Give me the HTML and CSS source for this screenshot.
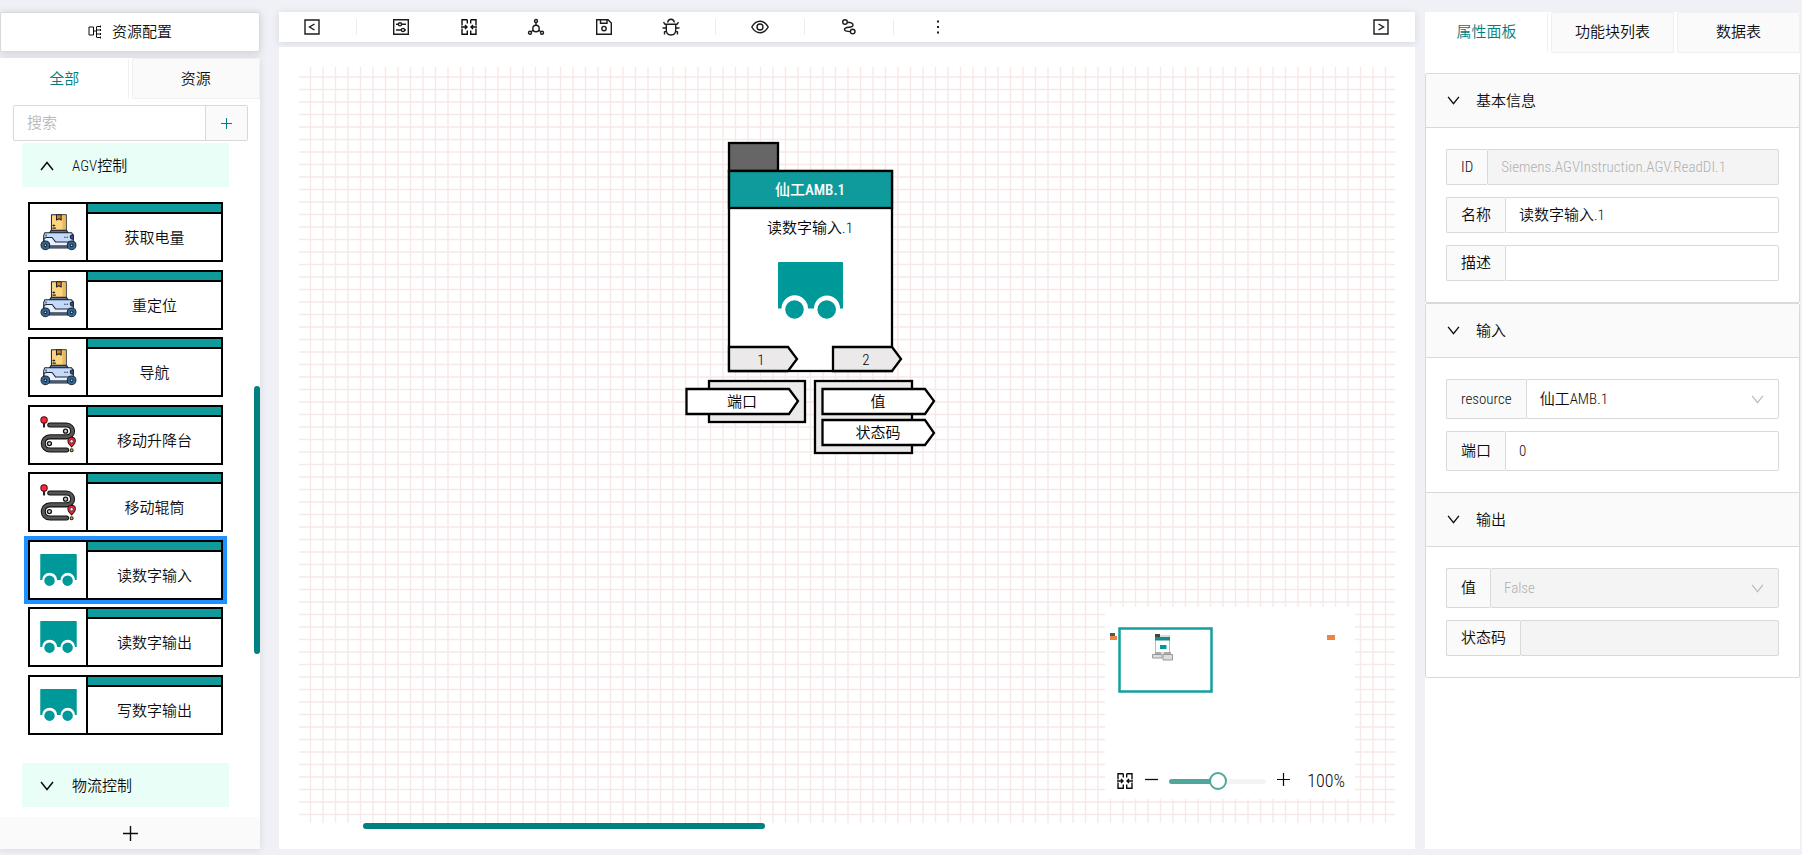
FILE: index.html
```html
<!DOCTYPE html>
<html lang="zh-CN">
<head>
<meta charset="utf-8">
<title>资源配置</title>
<link rel="stylesheet" href="styles.css">
</head>
<body>
<svg class="sprite" aria-hidden="true">
  <symbol id="i-agv" viewBox="0 0 110 110">
    <g stroke="#1b2430" stroke-width="3" stroke-linejoin="round">
      <path fill="#fdd57e" d="M34 2H78V49H34z"/>
      <path fill="#e8b760" stroke="none" d="M67 4H76V47H67z"/>
      <path fill="#e27a16" d="M49 2H63V18L56 14L49 18z"/>
      <path fill="#5f7590" d="M34 48H78L84 56H28z"/>
      <path fill="#c4dafa" d="M14 56H94L99 64V92H11V64z"/>
      <path fill="#e8f1fd" d="M12 72L20 70H36L46 83H98V96H12z"/>
      <path fill="none" d="M18 61V67M72 69H76M79 69H83"/>
      <path fill="#3b559f" d="M99 62V75Q90 75 90 68Q90 62 99 62z"/>
      <path fill="#7890ab" d="M28 95H82V101H28z"/>
      <circle cx="16" cy="93" r="13" fill="#326896"/><circle cx="94" cy="93" r="13" fill="#326896"/>
      <circle cx="16" cy="93" r="4" fill="#c4dafa"/><circle cx="94" cy="93" r="4" fill="#c4dafa"/>
    </g>
    <path d="M41 31V37M37 34H45M37 42H47" stroke="#1b2430" stroke-width="3"/>
  </symbol>
  <symbol id="i-belt" viewBox="0 0 110 110">
    <g fill="none" stroke-linecap="round">
      <path d="M29 27H78C102 27 104 62 78 62H30C3 62 3 101 30 101H79" stroke="#111" stroke-width="15"/>
      <path d="M29 27H78C102 27 104 62 78 62H30C3 62 3 101 30 101H79" stroke="#555" stroke-width="9"/>
    </g>
    <g fill="#d5d7da" stroke="#111" stroke-width="4"><circle cx="76" cy="45" r="6"/><circle cx="28" cy="82" r="6"/></g>
    <path d="M12 20V34" stroke="#222" stroke-width="6"/>
    <circle cx="12" cy="12" r="9.500" fill="#ff2635" stroke="#401015" stroke-width="3"/>
    <path d="M94 92L85 82Q78 64 94 63Q110 64 103 82z" fill="#ee2636" stroke="#401015" stroke-width="3"/>
    <circle cx="94" cy="75" r="5" fill="#eee" stroke="#401015" stroke-width="2"/>
    <circle cx="94" cy="102" r="4.500" fill="#e5b40d" stroke="#222" stroke-width="3"/>
  </symbol>
  <symbol id="i-cart" viewBox="0 0 65 57">
    <path fill="#009999" d="M1 0H64Q65 0 65 1V46.500H62A13 13 0 0 0 36 46.500H30A13 13 0 0 0 3.500 46.500H0V1Q0 0 1 0z"/>
    <circle cx="16.500" cy="47.500" r="9.300" fill="#009999"/><circle cx="48.700" cy="47.500" r="9.300" fill="#009999"/>
  </symbol>
  <symbol id="i-collapse" viewBox="0 0 18 18"><g fill="none" stroke="currentColor" stroke-width="1.400">
    <path d="M7.300 1.700H2V7.500M2 10.500V16.300H7.300V12.500M7.300 1.700V5.500M10.700 1.700H16V7.500M16 10.500V16.300H10.700V12.500M10.700 1.700V5.500M1 9H7M11 9H17M5 7L7 9L5 11M13 7L11 9L13 11"/></g></symbol>
  <symbol id="i-chev" viewBox="0 0 14 10"><path d="M1 1L7 8.500L13 1" fill="none" stroke="currentColor" stroke-width="1.500"/></symbol>
  <symbol id="i-plus" viewBox="0 0 14 14"><path d="M7 0V14M0 7H14" fill="none" stroke="currentColor" stroke-width="1.300"/></symbol>
</svg>

<div class="app">
  <aside class="sidebar">
    <button class="config-btn" type="button">
      <svg width="14" height="14" viewBox="0 0 14 14" fill="none" stroke="currentColor"><path d="M1 2H5.500V10H1zM5.500 6H8.500M13 1.500H9Q8.500 1.500 8.500 2V12Q8.500 12.500 9 12.500H13M8.500 5H13M8.500 9H13M12.500 .5V2.500M12.500 4V6M12.500 8V10M12.500 11.500V13.500"/></svg>
      <span>资源配置</span>
    </button>
    <div class="library">
      <div class="tabs" role="tablist">
        <button class="tab tab-active" role="tab" aria-selected="true">全部</button>
        <button class="tab" role="tab">资源</button>
      </div>
      <div class="search">
        <input type="text" placeholder="搜索" aria-label="搜索">
        <button type="button" aria-label="添加"><svg width="11" height="11"><use href="#i-plus"/></svg></button>
      </div>
      <div class="groups">
        <button class="group-head" type="button"><svg class="flip" width="14" height="10"><use href="#i-chev"/></svg>AGV控制</button>
        <ul class="blocks">
          <li class="block"><span class="block-icon"><svg width="37" height="37"><use href="#i-agv"/></svg></span><span class="block-name">获取电量</span></li>
          <li class="block"><span class="block-icon"><svg width="37" height="37"><use href="#i-agv"/></svg></span><span class="block-name">重定位</span></li>
          <li class="block"><span class="block-icon"><svg width="37" height="37"><use href="#i-agv"/></svg></span><span class="block-name">导航</span></li>
          <li class="block"><span class="block-icon"><svg width="37" height="37"><use href="#i-belt"/></svg></span><span class="block-name">移动升降台</span></li>
          <li class="block"><span class="block-icon"><svg width="37" height="37"><use href="#i-belt"/></svg></span><span class="block-name">移动辊筒</span></li>
          <li class="block block-selected"><span class="block-icon"><svg width="37" height="32"><use href="#i-cart"/></svg></span><span class="block-name">读数字输入</span></li>
          <li class="block"><span class="block-icon"><svg width="37" height="32"><use href="#i-cart"/></svg></span><span class="block-name">读数字输出</span></li>
          <li class="block"><span class="block-icon"><svg width="37" height="32"><use href="#i-cart"/></svg></span><span class="block-name">写数字输出</span></li>
        </ul>
        <button class="group-head" type="button"><svg width="14" height="10"><use href="#i-chev"/></svg>物流控制</button>
      </div>
      <button class="add-group" type="button" aria-label="添加分组"><svg width="15" height="15"><use href="#i-plus"/></svg></button>
      <span class="v-scroll"></span>
    </div>
  </aside>

  <main class="center">
    <div class="toolbar">
      <button class="tool" aria-label="收起左侧"><svg width="18" height="18" viewBox="0 0 18 18"><path d="M2 2H16V16H2zM11.500 6L6.500 9L11.500 12"/></svg></button>
      <span class="sep"></span>
      <div class="tool-group">
        <button class="tool" aria-label="设置"><svg width="18" height="18" viewBox="0 0 18 18"><path d="M1.700 1.700H16.300V16.300H1.700zM4 6.300H6.500M9.500 6.300H14M4 12H9.500M12.500 12H14"/><circle cx="8" cy="6.300" r="1.600"/><circle cx="11" cy="12" r="1.600"/></svg></button>
        <button class="tool" aria-label="对齐"><svg width="18" height="18"><use href="#i-collapse"/></svg></button>
        <button class="tool" aria-label="布局"><svg width="18" height="18" viewBox="0 0 18 18"><circle cx="9" cy="10.500" r="3.200"/><circle cx="9" cy="3" r="1.500"/><circle cx="3" cy="14.800" r="1.500"/><circle cx="15" cy="14.800" r="1.500"/><path d="M9 4.500V7.300M6.200 12.200L4.200 13.800M11.800 12.200L13.800 13.800"/></svg></button>
        <button class="tool" aria-label="保存"><svg width="18" height="18" viewBox="0 0 18 18"><path d="M1.700 1.700H13L16.300 5V16.300H1.700zM5.500 1.700V5.300H12V1.700"/><circle cx="9" cy="10.600" r="2.200"/></svg></button>
        <button class="tool" aria-label="调试"><svg width="18" height="18" viewBox="0 0 18 18"><path d="M4.300 6.200H13.700V12Q13.700 17 9 17Q4.300 17 4.300 12zM5.700 4.500Q6 1.200 9 1.200Q12 1.200 12.300 4.500M4.300 6.200H3L1.500 4.200M13.700 6.200H15L16.500 4.200M.5 10H4.300M13.700 10H17.500M4.500 13L2.500 14V16.500M13.500 13L15.500 14V16.500"/></svg></button>
      </div>
      <span class="sep"></span>
      <button class="tool" aria-label="预览"><svg width="18" height="18" viewBox="0 0 18 18"><path d="M.8 9Q4 3.200 9 3.200Q14 3.200 17.200 9Q14 14.800 9 14.800Q4 14.800 .8 9z"/><circle cx="9" cy="9" r="3"/></svg></button>
      <span class="sep"></span>
      <button class="tool" aria-label="连线"><svg width="18" height="18" viewBox="0 0 18 18"><circle cx="5" cy="4" r="2.300"/><circle cx="12.700" cy="13.600" r="2.300"/><path d="M7.300 4.300Q13 4.500 13 7Q13 9 9 9.200Q4.500 9.500 4.500 11.500Q4.500 13.600 10.400 13.600"/></svg></button>
      <span class="sep"></span>
      <button class="tool" aria-label="更多"><svg width="18" height="18" viewBox="0 0 18 18"><path class="dots" d="M8 2.500H10V4.500H8zM8 8H10V10H8zM8 13.500H10V15.500H8z"/></svg></button>
      <button class="tool tool-last" aria-label="收起右侧"><svg width="18" height="18" viewBox="0 0 18 18"><path d="M2 2H16V16H2zM6.500 6L11.500 9L6.500 12"/></svg></button>
    </div>

    <div class="canvas">
      <div class="stage">
        <svg class="grid" width="100%" height="100%">
          <defs><pattern id="mesh" width="25" height="25" patternUnits="userSpaceOnUse">
            <path d="M11.500 0V25M24 0V25M0 10H25M0 22.500H25" stroke="#f7e9e7" stroke-width="1.400"/>
          </pattern></defs>
          <rect width="100%" height="100%" fill="url(#mesh)"/>
        </svg>
        <svg class="node" width="252" height="318" viewBox="684 140 252 318">
          <g stroke="#000" stroke-width="2.300">
            <rect x="729" y="143" width="49" height="28" fill="#666"/>
            <rect x="729" y="171" width="163" height="200" fill="#fff"/>
            <rect x="729" y="171" width="163" height="37" fill="#0f9b9b"/>
            <path d="M729 347H788L797 359L788 371H729z" fill="#ebe9ea"/>
            <path d="M833 347H892L901 359L892 371H833z" fill="#ebe9ea"/>
            <rect x="709" y="381" width="96" height="41" fill="#ebe9ea"/>
            <rect x="815" y="381" width="97" height="72" fill="#ebe9ea"/>
            <path d="M686.500 389H789L798 401L789 414H686.500z" fill="#fff"/>
            <path d="M822.500 389H925L934 401L925 414H822.500z" fill="#fff"/>
            <path d="M822.500 420H925L934 433L925 445H822.500z" fill="#fff"/>
          </g>
          <use href="#i-cart" x="778" y="262" width="65" height="57"/>
          <g class="node-text">
            <text class="node-title" x="810" y="195">仙工AMB.1</text>
            <text x="810" y="233">读数字输入.1</text>
            <text x="761" y="365">1</text>
            <text x="866" y="365">2</text>
            <text x="742" y="407">端口</text>
            <text x="878" y="407">值</text>
            <text x="878" y="438">状态码</text>
          </g>
        </svg>
        <div class="minimap">
          <svg class="mini" width="250" height="140" viewBox="1105 607 250 140">
            <rect x="1110" y="633" width="5" height="4" fill="#555"/><rect x="1110" y="636" width="7" height="4" fill="#ee8444"/>
            <rect x="1327" y="635" width="8" height="5" fill="#ee8444"/>
            <rect x="1119.500" y="628.500" width="92" height="63" fill="#fff" stroke="#159f9f" stroke-width="2.500"/>
            <rect x="1155.500" y="636" width="14" height="17" fill="#fff" stroke="#bbb" stroke-width="1"/>
            <path d="M1155 634H1160V637H1155z" fill="#444"/><path d="M1155 637H1170V640.500H1155z" fill="#168d8d"/>
            <path d="M1160 645H1166.500V649H1160z" fill="#099"/>
            <path d="M1155 652H1161V655H1155zM1164 652H1171V655H1164z" fill="#aaa"/>
            <path d="M1152.500 654.500H1162V658H1152.500zM1163 654.500H1172.500V660H1163z" fill="#ddd" stroke="#999"/>
          </svg>
          <div class="zoom-bar">
            <button aria-label="适应画布"><svg width="18" height="18"><use href="#i-collapse"/></svg></button>
            <button aria-label="缩小"><svg width="13" height="14" viewBox="0 0 13 14"><path d="M0 5.500H13" stroke="currentColor" stroke-width="1.300"/></svg></button>
            <input type="range" min="0" max="200" value="100" aria-label="缩放">
            <button aria-label="放大"><svg class="raise" width="13" height="13"><use href="#i-plus"/></svg></button>
            <output>100%</output>
          </div>
        </div>
      </div>
      <span class="h-scroll"></span>
    </div>
  </main>

  <aside class="props">
    <div class="tabs" role="tablist">
      <button class="tab tab-active" role="tab" aria-selected="true">属性面板</button>
      <button class="tab" role="tab">功能块列表</button>
      <button class="tab" role="tab">数据表</button>
    </div>
    <section class="panel">
      <button class="panel-head" type="button"><svg width="13" height="9"><use href="#i-chev"/></svg>基本信息</button>
      <div class="panel-body">
        <div class="field"><label for="f-id">ID</label><input id="f-id" value="Siemens.AGVInstruction.AGV.ReadDI.1" disabled></div>
        <div class="field"><label for="f-name">名称</label><input id="f-name" value="读数字输入.1"></div>
        <div class="field"><label for="f-desc">描述</label><input id="f-desc"></div>
      </div>
    </section>
    <section class="panel">
      <button class="panel-head" type="button"><svg width="13" height="9"><use href="#i-chev"/></svg>输入</button>
      <div class="panel-body">
        <div class="field field-tall"><label for="f-res">resource</label><span class="select"><select id="f-res"><option>仙工AMB.1</option></select><svg width="13" height="9"><use href="#i-chev"/></svg></span></div>
        <div class="field field-tall"><label for="f-port">端口</label><input id="f-port" value="0"></div>
      </div>
      <button class="panel-head panel-head-next" type="button"><svg width="13" height="9"><use href="#i-chev"/></svg>输出</button>
      <div class="panel-body">
        <div class="field field-tall"><label for="f-val">值</label><span class="select"><select id="f-val" disabled><option>False</option></select><svg width="13" height="9"><use href="#i-chev"/></svg></span></div>
        <div class="field"><label for="f-code">状态码</label><input id="f-code" disabled></div>
      </div>
    </section>
  </aside>
</div>
</body>
</html>
```
FILE: styles.css
```css
* { box-sizing: border-box; }

body {
  margin: 0;
  background: #f0f1f6;
  color: #0c0c0c;
  font: 350 15px/24px "Roboto Condensed", "Liberation Sans Narrow", "Noto Sans CJK SC", sans-serif;
}

button, input, select {
  margin: 0;
  padding: 0;
  border: 0;
  border-radius: 0;
  background: none;
  color: inherit;
  font: inherit;
  outline: 0;
}

button { cursor: pointer; }
svg { display: block; flex: none; }
.sprite { position: absolute; width: 0; height: 0; }

.app {
  display: grid;
  grid-template-columns: 260px minmax(0, 1fr) 375px;
  height: 100vh;
  padding: 12px 2px 6px 0;
}

/* Left sidebar */
.sidebar { display: flex; flex-direction: column; gap: 6px; }

.config-btn {
  display: flex;
  align-items: center;
  justify-content: center;
  gap: 10px;
  height: 40px;
  border: 1px solid #d9d9d9;
  border-radius: 2px;
  background: #fff;
  box-shadow: 0 1px 8px rgba(0, 0, 0, .14);
}

.library {
  position: relative;
  display: flex;
  flex: 1;
  flex-direction: column;
  min-height: 0;
  background: #fff;
  box-shadow: 0 1px 8px rgba(0, 0, 0, .1);
}

.tabs { display: flex; gap: 3px; background: #fff; }

.tab {
  flex: 1;
  height: 41px;
  border: 1px solid #f0f0f0;
  border-radius: 2px 2px 0 0;
  background: #fafafa;
}

.tab-active {
  border-color: #fff #f0f0f0 #fff #fff;
  background: #fff;
  color: #008080;
}

.search {
  display: grid;
  grid-template-columns: 1fr 42px;
  height: 36px;
  margin: 6px 12px 2px 13px;
  border: 1px solid #d9d9d9;
  border-radius: 2px;
}

.search input { min-width: 0; padding: 0 13px; }
.search input::placeholder { color: #b8b8b8; }

.search button {
  display: grid;
  place-items: center;
  border-left: 1px solid #d9d9d9;
  background: #fafafa;
  color: #008080;
}

.groups { flex: 1; min-height: 0; overflow: hidden; padding: 0 31px 0 22px; }

.group-head {
  display: flex;
  align-items: center;
  gap: 18px;
  width: 100%;
  height: 44px;
  padding: 2px 0 0 18px;
  background: #eafef8;
}

.flip { transform: rotate(180deg); }

.blocks {
  display: grid;
  align-content: space-between;
  height: 533px;
  margin: 15px 6px 28px;
  padding: 0;
  list-style: none;
}

.block {
  display: grid;
  grid-template-columns: 56px 1fr;
  height: 60px;
  border: 2px solid #000;
}

.block-selected { outline: 4px solid #1e90ff; }

.block-icon { display: grid; place-items: center; }

.block-name {
  display: grid;
  place-items: center;
  border-left: 2px solid #000;
  background: linear-gradient(#0f9b9b 8px, #000 8px, #000 10px, #fff 10px);
  padding-top: 12px;
}

.add-group {
  display: grid;
  place-items: center;
  height: 32px;
  background: #fafafa;
}

.v-scroll {
  position: absolute;
  right: 0;
  top: 328px;
  width: 6px;
  height: 268px;
  border-radius: 3px;
  background: #008080;
}

/* Center */
.center {
  display: flex;
  flex-direction: column;
  gap: 5px;
  margin: 0 10px 0 19px;
}

.toolbar {
  display: flex;
  align-items: center;
  gap: 30px;
  height: 30px;
  padding: 0 20px 0 19px;
  background: #fff;
  box-shadow: 0 1px 8px rgba(0, 0, 0, .1);
}

.tool-group { display: flex; justify-content: space-between; width: 298px; }
.tool { display: grid; place-items: center; width: 28px; height: 30px; }
.tool-last { margin-left: auto; }
.tool svg { fill: none; stroke: #1c1c1c; stroke-width: 1.4; }
.tool .dots { fill: #1c1c1c; stroke: none; }
.sep { width: 1px; height: 16px; background: #ececec; }

.canvas {
  position: relative;
  display: flex;
  flex: 1;
  padding: 20px 20px 26px;
  background: #fff;
}

.stage { position: relative; flex: 1; }
.grid { position: absolute; inset: 0; }
.node { position: absolute; left: 385px; top: 73px; }
.node-text { fill: #000; text-anchor: middle; }
.node-title { fill: #fff; font-weight: 500; }

.minimap {
  position: absolute;
  right: 40px;
  bottom: 24px;
  width: 250px;
  background: #fff;
}

.zoom-bar {
  display: flex;
  align-items: center;
  height: 52px;
  padding: 16px 10px 0 11px;
}

.zoom-bar button { margin-right: 11px; }
.zoom-bar .raise { margin-bottom: 3px; }
.zoom-bar input + button { margin: 0 0 0 11px; }
.zoom-bar output { margin-left: auto; font-size: 18px; }

.zoom-bar input {
  width: 97px;
  height: 18px;
  appearance: none;
}

.zoom-bar input::-webkit-slider-runnable-track {
  height: 5px;
  border-radius: 3px;
  background: linear-gradient(90deg, #4fa69c 50%, #f3f3f3 50%);
}

.zoom-bar input::-webkit-slider-thumb {
  width: 18px;
  height: 18px;
  margin-top: -7px;
  border: 2px solid #4fa69c;
  border-radius: 50%;
  background: #fff;
  appearance: none;
}

.h-scroll {
  position: absolute;
  left: 84px;
  bottom: 20px;
  width: 402px;
  height: 6px;
  border-radius: 3px;
  background: #008080;
}

/* Right panel */
.props { background: #fff; }
.props .tabs { margin-bottom: 20px; }
.props .tab { padding-bottom: 2px; }

.panel { border: 1px solid #d9d9d9; border-radius: 2px; }

.panel-head {
  display: flex;
  align-items: center;
  gap: 16px;
  width: 100%;
  height: 54px;
  padding-left: 21px;
  border-bottom: 1px solid #d9d9d9;
  background: #fafafa;
}

.panel-head-next { height: 55px; border-top: 1px solid #d9d9d9; }

.panel-body {
  display: grid;
  gap: 12px;
  padding: 21px 20px;
}

.field { display: flex; height: 36px; }
.field-tall { height: 40px; }

.field label {
  display: flex;
  align-items: center;
  padding: 0 14px;
  border: 1px solid #d9d9d9;
  border-right: 0;
  border-radius: 2px 0 0 2px;
  background: #fafafa;
}

.field input, .select {
  flex: 1;
  min-width: 0;
  border: 1px solid #d9d9d9;
  border-radius: 2px;
}

.field input { padding: 0 13px; }

.select { position: relative; display: flex; }

.select select {
  width: 100%;
  padding: 0 13px;
  appearance: none;
}

.select svg {
  position: absolute;
  right: 14px;
  top: 15px;
  color: #bfbfbf;
  pointer-events: none;
}

.field :disabled { background: #f4f4f4; color: #b0b0b0; opacity: 1; }
```
